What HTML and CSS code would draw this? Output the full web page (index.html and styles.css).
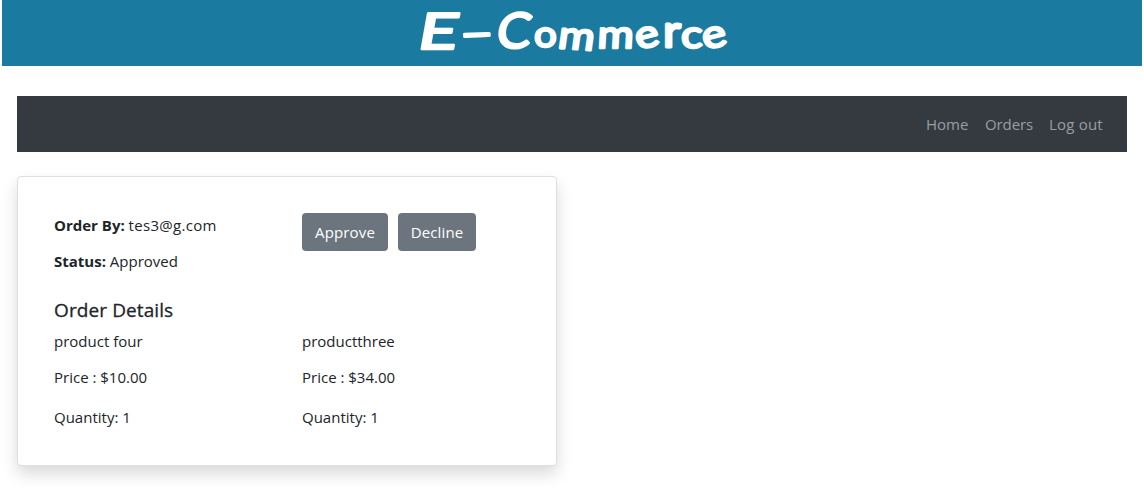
FILE: index.html
```html
<!DOCTYPE html>
<html lang="en">
<head>
<meta charset="utf-8">
<title>E-Commerce</title>
<link rel="stylesheet" href="styles.css">
</head>
<body>
<header class="banner">
<svg class="wordmark" width="330" height="66" viewBox="410 0 330 66" role="img" aria-label="E-Commerce">
<text class="cap" transform="translate(416 49) skewX(-10) scale(1.4 1.02)">E</text>
<text class="cap" transform="translate(460 48) rotate(-2) scale(1.9 .85)">-</text>
<text class="cap" transform="translate(495 48) skewX(-8) scale(1.04 1)">C</text>
<text class="low" transform="translate(534 47) scale(1.03 .95)">o</text>
<text class="low" transform="translate(557 48) rotate(4) skewX(-4) scale(1.13 1)">m</text>
<text class="low" transform="translate(597 48) skewX(-3) scale(1.13 1)">m</text>
<text class="low" transform="translate(638 50) rotate(-14) scale(1.15 1)">e</text>
<text class="low" transform="translate(663 47) scale(1.25 1.15)">r</text>
<text class="low" transform="translate(681 48) scale(1.16 1)">c</text>
<text class="low" transform="translate(705 50) rotate(-14) scale(1.17 1)">e</text>
</svg>
</header>
<nav class="navbar">
<a class="nav-link home">Home</a>
<a class="nav-link orders">Orders</a>
<a class="nav-link logout">Log out</a>
</nav>
<main class="card">
<section class="summary">
<div class="info">
<p><b>Order By:</b> <span class="value email">tes3@g.com</span></p>
<p><b>Status:</b> <span class="value">Approved</span></p>
</div>
<div class="actions">
<button class="btn approve">Approve</button>
<button class="btn decline">Decline</button>
</div>
</section>
<h2 class="heading">Order Details</h2>
<section class="products">
<div class="product"><p>product four</p><p class="price">Price : $10.00</p><p>Quantity: 1</p></div>
<div class="product"><p>productthree</p><p class="price">Price : $34.00</p><p>Quantity: 1</p></div>
</section>
</main>
</body>
</html>
```

FILE: styles.css
```css
* { box-sizing: border-box; }
body {
  margin: 0;
  min-height: 504px;
  background: #fff;
  color: #212529;
  font: 15px/24px "Segoe UI", "Open Sans", "Noto Sans", sans-serif;
  letter-spacing: 0;
}
p { margin: 0 0 12px; white-space: nowrap; }
.banner { height: 66px; margin: 0 2px; padding-left: 408px; background: #1a7a9f; }
.wordmark { display: block; overflow: visible; fill: #fff; stroke: #fff; stroke-linejoin: round; stroke-linecap: round; font-family: Lato, sans-serif; }
.cap { font-size: 49px; font-weight: 400; stroke-width: 2.4px; }
.low { font-size: 39px; font-weight: 400; stroke-width: 2.4px; }
.navbar {
  display: flex; justify-content: flex-end; align-items: center;
  height: 56px; margin: 30px 17px 24px; padding: 0 24px; gap: 16px;
  background: #343a40; color: #9a9da0;
}
.nav-link { white-space: nowrap; }
.home { width: 43px; }
.orders { width: 48px; letter-spacing: -0.1px; }
.logout { width: 54px; letter-spacing: 0.2px; }
.card {
  width: 540px; height: 290px; margin-left: 17px; padding: 36px;
  border: 1px solid #dfdfdf; border-radius: 4px; background: #fff;
  box-shadow: 0 8px 16px rgba(0, 0, 0, .15);
}
.summary, .products { display: grid; grid-template-columns: 248px 1fr; }
.summary { height: 85px; }
.email { letter-spacing: 0.3px; }
.actions { display: flex; gap: 10px; }
.btn {
  height: 38px; padding: 0; border: 0; border-radius: 4px;
  background: #6c757d; color: #fff; font: inherit; letter-spacing: 0.15px;
}
.approve { width: 86px; }
.decline { width: 78px; }
.heading {
  margin: 0 0 7px; font-size: 19px; line-height: 24px; font-weight: 500;
  letter-spacing: 0.1px; -webkit-text-stroke: 0.3px #212529;
}
.price { margin-bottom: 16px; }
```
